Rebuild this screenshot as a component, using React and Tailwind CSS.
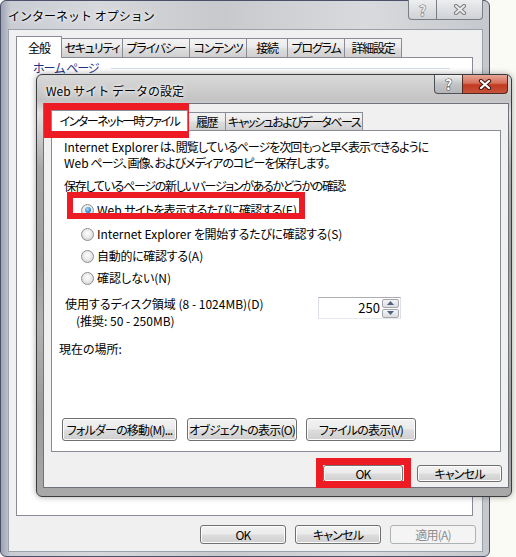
import React from "react";

const outerTabs = [
  { label: "全般", w: "w-[46px]", selected: true },
  { label: "セキュリティ", w: "w-[62px]" },
  { label: "プライバシー", w: "w-[68px]" },
  { label: "コンテンツ", w: "w-[58px]" },
  { label: "接続", w: "w-[42px]" },
  { label: "プログラム", w: "w-[58px]" },
  { label: "詳細設定", w: "w-[58px]" },
];

const innerTabs = [
  { label: "インターネット一時ファイル", w: "w-[137px]", selected: true },
  { label: "履歴", w: "w-[39px]" },
  { label: "キャッシュおよびデータベース", w: "w-[138px]" },
];

function Button({ children, className = "", disabled = false }) {
  return (
    <div
      className={`flex items-center justify-center whitespace-nowrap rounded-[3px] border text-[12px] leading-none tracking-[-0.8px] ${
        disabled
          ? "border-[#adb2b5] bg-[#f4f4f4] text-[#8d8d8d]"
          : "border-[#707070] bg-[linear-gradient(to_bottom,#f2f2f2_0%,#ebebeb_48%,#dddddd_52%,#cfcfcf_100%)] text-black shadow-[inset_0_0_0_1px_#fcfcfc]"
      } ${className}`}
    >
      {children}
    </div>
  );
}

function Tab({ label, w, selected }) {
  if (selected) {
    return (
      <div className={`relative z-10 -mb-px flex h-[22px] items-center justify-center whitespace-nowrap border border-b-0 border-[#898c95] bg-white tracking-[-1px] ${w}`}>
        {label}
      </div>
    );
  }
  return (
    <div className={`-ml-px flex h-[19px] items-center justify-center whitespace-nowrap border border-b-0 border-[#898c95] bg-[linear-gradient(to_bottom,#f3f3f3_0%,#ebebeb_45%,#dddddd_55%,#cfcfcf_100%)] tracking-[-1.2px] ${w}`}>
      {label}
    </div>
  );
}

function InnerTab({ label, w, selected }) {
  if (selected) {
    return (
      <div className={`relative z-10 -mb-px flex h-[21px] items-center justify-center whitespace-nowrap border border-b-0 border-[#898c95] bg-white tracking-[-1.5px] ${w}`}>
        {label}
      </div>
    );
  }
  return (
    <div className={`-ml-px flex h-[18px] items-center justify-center whitespace-nowrap border border-b-0 border-[#898c95] bg-[linear-gradient(to_bottom,#f3f3f3_0%,#ebebeb_45%,#dddddd_55%,#cfcfcf_100%)] tracking-[-1.5px] ${w}`}>
      {label}
    </div>
  );
}

function Radio({ checked, children, className = "" }) {
  return (
    <div className={`flex h-[22px] items-center whitespace-nowrap ${className}`}>
      <span className="flex h-[13px] w-[13px] items-center justify-center rounded-full border border-[#8e8f8f] bg-[radial-gradient(circle_at_50%_40%,#ffffff_0%,#e6e6e6_55%,#c9c9c9_100%)]">
        {checked && (
          <span className="h-[6px] w-[6px] rounded-full bg-[radial-gradient(circle_at_40%_35%,#a9dcf6_0%,#3b8fd0_55%,#1b4f8c_100%)]" />
        )}
      </span>
      <span className="ml-[3px]">{children}</span>
    </div>
  );
}

function CloseGlyph({ light }) {
  return (
    <svg width="14" height="11" viewBox="0 0 14 11">
      <path d="M3 2 L11 9 M11 2 L3 9" stroke={light ? "#7d7d7d" : "#3b1a14"} strokeWidth="4.2" strokeLinecap="round" />
      <path d="M3 2 L11 9 M11 2 L3 9" stroke={light ? "#e9e9e9" : "#ffffff"} strokeWidth="2.2" strokeLinecap="round" />
    </svg>
  );
}

function SpinArrow({ up }) {
  return (
    <svg width="7" height="4" viewBox="0 0 7 4">
      <path d={up ? "M0 4 L3.5 0 L7 4 Z" : "M0 0 L3.5 4 L7 0 Z"} fill="#4d6185" />
    </svg>
  );
}

export default function App() {
  return (
    <div className="relative h-[557px] w-[516px] overflow-hidden bg-[#fbfbf5] font-['Noto_Sans_CJK_JP',sans-serif] text-[12px] text-black [font-feature-settings:'palt']">
      {/* Outer window: インターネット オプション */}
      <div className="flex h-[557px] w-[490px] flex-col rounded-[6px] border border-[#4c5068] bg-[linear-gradient(to_right,#9ea3b4_0%,#c9ccd3_2%,#d6d8dc_20%,#c7c9cd_45%,#d9dadd_75%,#c5c8cd_100%)] pl-[7px] pr-[6px] pb-[4px]">
        {/* title bar */}
        <div className="flex h-[28px] items-start">
          <span className="mt-[6px] whitespace-nowrap text-[12px] [font-feature-settings:normal] [text-shadow:0_0_6px_#ffffff,0_0_3px_#ffffff]">
            インターネット オプション
          </span>
          <div className="-mt-px ml-auto flex h-[20px]">
            <div className="flex w-[29px] items-center justify-center rounded-bl-[4px] border border-t-0 border-[#7a7d84] bg-[linear-gradient(to_bottom,#eceef0,#cfd2d6)]">
              <span className="text-[14px] font-bold leading-none text-[#e8e8e8] [-webkit-text-stroke:1px_#6f6f6f] [paint-order:stroke_fill]">?</span>
            </div>
            <div className="-ml-px flex w-[47px] items-center justify-center rounded-br-[4px] border border-t-0 border-[#7a7d84] bg-[linear-gradient(to_bottom,#eceef0,#cfd2d6)]">
              <CloseGlyph light />
            </div>
          </div>
        </div>

        {/* client area */}
        <div className="flex h-[523px] flex-col border border-[#9ba1aa] bg-[#f0f0f0]">
          <div className="flex h-[27px] items-end pl-[7px]">
            {outerTabs.map((t) => (
              <Tab key={t.label} {...t} />
            ))}
          </div>
          <div className="ml-[7px] h-[459px] w-[457px] border border-[#898c95] bg-white">
            <div className="flex items-center pl-[16px] pt-[2px] leading-[16px]">
              <span className="whitespace-nowrap tracking-[-1px] text-[#1e3287]">ホーム ページ</span>
              <span className="ml-[12px] mr-[22px] h-px flex-1 bg-[#d5dfe5]" />
            </div>
          </div>
          <div className="mt-[9px] flex justify-end gap-[9px] pr-[6px]">
            <Button className="h-[19px] w-[86px]">OK</Button>
            <Button className="h-[19px] w-[86px]">キャンセル</Button>
            <Button className="h-[19px] w-[86px]" disabled>
              適用(A)
            </Button>
          </div>
        </div>
      </div>

      {/* Inner dialog: Web サイト データの設定 */}
      <div className="absolute left-[36px] top-[74px] flex h-[423px] w-[476px] flex-col rounded-[6px] border border-[#3a3c40] bg-[linear-gradient(to_bottom,#d9d9d9_0%,#c3c3c3_6%,#e3e3e3_9%,#a9a9a9_22%,#9e9e9e_45%,#b2b2b2_60%,#9a9a9a_80%,#a9a9a9_100%)] pb-[8px] pl-[6px] pr-[2px] shadow-[0_0_6px_rgba(0,0,0,0.35)]">
        <div className="flex h-[28px] items-start">
          <span className="ml-[3px] mt-[7px] whitespace-nowrap text-[12px] [font-feature-settings:normal] [text-shadow:0_0_6px_#ffffff,0_0_3px_#ffffff]">
            Web サイト データの設定
          </span>
          <div className="ml-auto mr-[1px] flex h-[19px]">
            <div className="flex w-[29px] items-center justify-center rounded-bl-[4px] border border-t-0 border-[#4f5257] bg-[linear-gradient(to_bottom,#eeeeee,#c2c4c7_50%,#b3b5b8)]">
              <span className="text-[14px] font-bold leading-none text-white [-webkit-text-stroke:1px_#3d3d3d] [paint-order:stroke_fill]">?</span>
            </div>
            <div className="-ml-px flex w-[46px] items-center justify-center rounded-br-[4px] border border-t-0 border-[#4f2a22] bg-[linear-gradient(to_bottom,#e8a697_0%,#d5705a_45%,#c2391f_55%,#c6533b_100%)]">
              <CloseGlyph />
            </div>
          </div>
        </div>

        <div className="flex h-[385px] flex-col border border-[#6f747a] bg-[#f0f0f0]">
          <div className="flex h-[26px] items-end pl-[7px]">
            {innerTabs.map((t) => (
              <InnerTab key={t.label} {...t} />
            ))}
          </div>

          <div className="ml-[7px] flex h-[322px] w-[450px] flex-col whitespace-nowrap border border-[#898c95] bg-white pb-[10px] pl-[12px] pt-[8px]">
            <p className="leading-[16px] tracking-[-1px]">
              <span className="tracking-normal">Internet Explorer</span> は、閲覧しているページを次回もっと早く表示できるように
              <br />
              <span className="tracking-normal">Web</span> ページ、画像、およびメディアのコピーを保存します。
            </p>
            <p className="mt-[7px] leading-[15px] tracking-[-1.3px]">保存しているページの新しいバージョンがあるかどうかの確認:</p>

            <div className="ml-[17px] mt-[6px] flex flex-col">
              <Radio checked>
                Web <span className="tracking-[-0.7px]">サイトを表示するたびに確認する</span>(E)
              </Radio>
              <Radio className="mt-[2px]">
                Internet Explorer <span className="tracking-[-0.3px]">を開始するたびに確認する</span>(S)
              </Radio>
              <Radio>
                <span className="tracking-[-0.3px]">自動的に確認する</span>(A)
              </Radio>
              <Radio>確認しない(N)</Radio>
            </div>

            <div className="mt-[6px] flex">
              <div className="ml-[1px] w-[253px] leading-[17px]">
                <div>使用するディスク領域 (8 - 1024MB)(D)</div>
                <div className="pl-[11px]">(推奨: 50 - 250MB)</div>
              </div>
              <div className="mt-[2px] flex h-[22px] w-[83px] items-center border border-[#abadb3] border-b-[#e3e9ef] border-x-[#dbdfe6] bg-white">
                <span className="flex-1 pr-[2px] text-right text-[13px]">250</span>
                <div className="flex flex-col gap-px pr-px">
                  <div className="flex h-[9px] w-[17px] items-center justify-center rounded-[2px] border border-[#a4a7ad] bg-[linear-gradient(to_bottom,#f5f5f5,#dcdcdc)]">
                    <SpinArrow up />
                  </div>
                  <div className="flex h-[9px] w-[17px] items-center justify-center rounded-[2px] border border-[#a4a7ad] bg-[linear-gradient(to_bottom,#f5f5f5,#dcdcdc)]">
                    <SpinArrow />
                  </div>
                </div>
              </div>
            </div>

            <p className="-ml-[5px] mt-[12px] leading-[16px]">現在の場所:</p>

            <div className="-ml-[2px] mt-auto flex">
              <Button className="h-[23px] w-[115px]">フォルダーの移動(M)...</Button>
              <Button className="ml-[10px] h-[23px] w-[110px]">オブジェクトの表示(O)</Button>
              <Button className="ml-[9px] h-[23px] w-[110px]">ファイルの表示(V)</Button>
            </div>
          </div>

          <div className="mt-[13px] flex justify-end gap-[14px] pr-[6px]">
            <Button className="h-[17px] w-[80px]">OK</Button>
            <Button className="h-[17px] w-[85px]">キャンセル</Button>
          </div>
        </div>
      </div>

      {/* red annotation boxes */}
      <div className="pointer-events-none absolute left-[44px] top-[103px] h-[35px] w-[145px] border-x-[8px] border-y-[9px] border-[#ed1c24]" />
      <div className="pointer-events-none absolute left-[67px] top-[192px] h-[27px] w-[238px] border-[6px] border-[#ed1c24]" />
      <div className="pointer-events-none absolute left-[316px] top-[458px] h-[30px] w-[95px] border-[7px] border-[#ed1c24]" />
    </div>
  );
}
